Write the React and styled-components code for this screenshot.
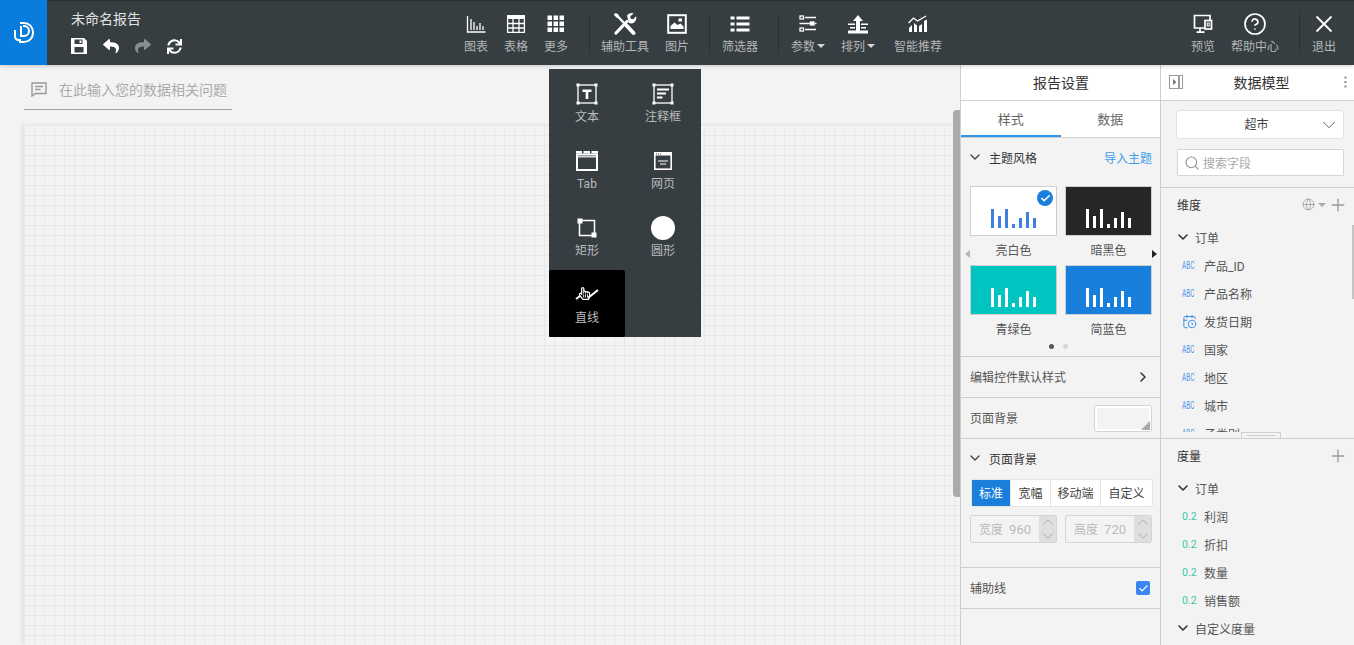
import React from 'react'
import styled, { createGlobalStyle } from 'styled-components'
import { FaReply, FaShare, FaSync, FaRegHandPointer } from 'react-icons/fa'
import { CalendarClock, Check, ChevronDown, ChevronRight, ChevronUp, CircleHelp, Globe, Plus, Search } from 'lucide-react'

const GlobalStyle = createGlobalStyle`
	html, body {
		margin: 0;
		height: 100%;
		overflow: hidden;
		background: #f3f3f3;
		font-family: Roboto, "Noto Sans CJK SC", sans-serif;
		font-size: 12px;
		color: #444;
	}
	* { box-sizing: border-box; }
`

const PageX = styled.div`
	position: relative;
	width: 1354px;
	height: 645px;
	display: flex;
	flex-direction: column;
	overflow: hidden;
`

const TopBarX = styled.header`
	flex: 0 0 65px;
	display: flex;
	align-items: stretch;
	background: #373e41;
	border-top: 1px solid #2b3032;
	box-shadow: 0 1px 4px rgba(0,0,0,0.2);
	z-index: 2;
`

const LogoX = styled.div`
	flex: 0 0 47px;
	display: flex;
	align-items: center;
	justify-content: center;
	background: #0a7cdc;
	margin-top: -1px;
`

const TitleBlockX = styled.div`
	flex: 0 0 409px;
	padding: 8px 0 0 24px;
`

const ReportNameX = styled.div`
	font-size: 14px;
	line-height: 20px;
	color: #e2e2e2;
`

const QuickRowX = styled.div`
	display: flex;
	align-items: center;
	gap: 15px;
	margin-top: 8px;
	height: 18px;
	margin-left: -1px;
	color: #fff;
`

const QuickIconX = styled.span`
	display: flex;
	width: 17px;
	justify-content: center;
	color: ${props => props.$off ? '#8a8f91' : '#fff'};
`

const ToolX = styled.div`
	flex: 0 0 ${props => props.$w}px;
	display: flex;
	flex-direction: column;
	align-items: center;
	padding-top: 11px;
`

const ToolIconX = styled.div`
	height: 24px;
	display: flex;
	align-items: center;
	justify-content: center;
	color: #fff;
`

const ToolLabelX = styled.div`
	margin-top: 2px;
	line-height: 18px;
	white-space: nowrap;
	color: #b4b7b8;
`

const CaretX = styled.span`
	display: inline-block;
	width: 0;
	height: 0;
	margin-left: 2px;
	vertical-align: 3px;
	border-left: 4px solid transparent;
	border-right: 4px solid transparent;
	border-top: 4px solid #d5d5d5;
`

const SepX = styled.div`
	flex: 0 0 1px;
	align-self: flex-start;
	height: 40px;
	margin: 12px ${props => props.$r}px 0 ${props => props.$l}px;
	background: #2c3234;
`

const RightToolsX = styled.div`
	margin-left: auto;
	display: flex;
	padding-right: 6px;
`

const BodyX = styled.div`
	flex: 1;
	display: flex;
	min-height: 0;
`

const StageX = styled.main`
	position: relative;
	flex: 0 0 960px;
	display: flex;
	flex-direction: column;
	padding-left: 24px;
	overflow: hidden;
`

const AskBarX = styled.div`
	flex: 0 0 45px;
	width: 208px;
	display: flex;
	align-items: center;
	gap: 12px;
	padding: 4px 0 0 7px;
	border-bottom: 1px solid #a0a0a0;
	font-size: 14px;
	white-space: nowrap;
	color: #aaa;
`

const CanvasX = styled.div`
	flex: 1;
	margin-top: 15px;
	border-top-left-radius: 3px;
	box-shadow: -3px -1px 2px #e6e6e6;
	background-color: #f3f3f3;
	background-image:
		linear-gradient(to right, #e8e8e8 1px, transparent 1px),
		linear-gradient(to bottom, #e8e8e8 1px, transparent 1px);
	background-size: 10px 10px;
`

const StageScrollX = styled.div`
	position: absolute;
	right: 0;
	top: 45px;
	width: 7px;
	height: 387px;
	background: #ababab;
	border-radius: 4px 0 0 4px;
`

const PanelX = styled.aside`
	flex: 0 0 ${props => props.$w}px;
	display: flex;
	flex-direction: column;
	border-left: 1px solid #cfcfcf;
	background: #f3f3f3;
`

const PanelHeadX = styled.div`
	flex: 0 0 36px;
	height: 36px;
	display: flex;
	align-items: center;
	justify-content: center;
	padding: 0 7px 2px 8px;
	background: #fff;
	border-bottom: 1px solid #cfcfcf;
	font-size: 14px;
	color: #333;
`

const PanelTitleX = styled.div`
	flex: 1;
	text-align: center;
	padding-right: 4px;
`

const TabsX = styled.div`
	flex: 0 0 37px;
	display: flex;
	background: #fff;
	border-bottom: 1px solid #cfcfcf;
`

const TabX = styled.div`
	flex: 1;
	display: flex;
	align-items: center;
	justify-content: center;
	font-size: 13px;
	color: #666;
	border-bottom: 2px solid ${props => props.$active ? '#2a96ee' : 'transparent'};
`

const SectionHeadX = styled.div`
	height: 40px;
	display: flex;
	align-items: center;
	padding: 0 8px 2px 6px;
	color: #333;
`

const SectionNameX = styled.span`
	margin-left: 6px;
	flex: 1;
`

const LinkX = styled.span`
	color: #3d9cec;
`

const ThemeWrapX = styled.div`
	position: relative;
	display: grid;
	grid-template-columns: 87px 87px;
	column-gap: 8px;
	padding: 8px 0 0 9px;
`

const ThemeItemX = styled.div`
	display: flex;
	flex-direction: column;
`

const ThemeCardX = styled.div`
	position: relative;
	height: 50px;
	display: flex;
	align-items: flex-end;
	justify-content: center;
	gap: 4px;
	padding-bottom: 7px;
	background: ${props => props.$bg};
	border: 1px solid #cfcfcf;
`

const BarX = styled.i`
	display: block;
	width: 3px;
	height: ${props => props.$h}px;
	background: ${props => props.$color};
`

const ThemeNameX = styled.div`
	height: 29px;
	line-height: 30px;
	text-align: center;
	color: #555;
`

const TickX = styled.div`
	position: absolute;
	top: 3px;
	right: 3px;
	width: 16px;
	height: 16px;
	display: flex;
	align-items: center;
	justify-content: center;
	border-radius: 50%;
	background: #1b7fdc;
	color: #fff;
`

const PagerArrowX = styled.div`
	position: absolute;
	top: 72px;
	${props => props.$side}: ${props => props.$side === 'left' ? '4px' : '3px'};
	width: 0;
	height: 0;
	border-top: 4px solid transparent;
	border-bottom: 4px solid transparent;
	${props => props.$side === 'left' ? 'border-right: 5px solid #b5b5b5;' : 'border-left: 5px solid #222;'}
`

const DotsX = styled.div`
	height: 13px;
	display: flex;
	justify-content: center;
	gap: 9px;
	border-bottom: 1px solid #cfcfcf;
	padding-right: 4px;
`

const DotX = styled.i`
	display: block;
	width: 5px;
	height: 5px;
	border-radius: 50%;
	background: ${props => props.$on ? '#555' : '#d5d5d5'};
`

const RowX = styled.div`
	height: 41px;
	display: flex;
	align-items: center;
	justify-content: space-between;
	padding: 0 ${props => props.$pr || 9}px 0 9px;
	border-bottom: 1px solid #cfcfcf;
	color: #555;
`

const RowTextX = styled.span`
	margin-top: -2px;
`

const SwatchX = styled.div`
	position: relative;
	width: 58px;
	height: 27px;
	background: #f3f3f3;
	border: 3px solid #fff;
	outline: 1px solid #d5d5d5;
	outline-offset: -1px;
	border-radius: 2px;
	&::after {
		content: '';
		position: absolute;
		right: -1px;
		bottom: -1px;
		border-left: 9px solid transparent;
		border-bottom: 9px solid #a9a9a9;
	}
`

const PageSizeX = styled.div`
	height: 129px;
	border-bottom: 1px solid #cfcfcf;
`

const SegmentsX = styled.div`
	display: flex;
	height: 28px;
	margin-left: 10px;
	width: 182px;
	background: #fff;
	border: 1px solid #e4e4e4;
	border-radius: 2px;
`

const SegmentX = styled.div`
	flex: 0 0 ${props => props.$w}px;
	display: flex;
	align-items: center;
	justify-content: center;
	padding-bottom: 2px;
	background: ${props => props.$active ? '#1a7fdb' : 'transparent'};
	color: ${props => props.$active ? '#fff' : '#444'};
	border-right: 1px solid #e4e4e4;
	&:last-child { border-right: 0; }
`

const SizeRowX = styled.div`
	display: flex;
	gap: 8px;
	margin: 8px 0 0 9px;
`

const SizeInputX = styled.div`
	width: 87px;
	height: 28px;
	display: flex;
	align-items: center;
	padding-left: 8px;
	border: 1px solid #d5d5d5;
	border-radius: 2px;
	color: #bbb;
`

const SizeTextX = styled.span`
	margin-top: -2px;
`

const SizeValueX = styled.span`
	flex: 1;
	padding-right: 8px;
	text-align: right;
	font-size: 13px;
`

const SpinX = styled.div`
	flex: 0 0 17px;
	height: 100%;
	overflow: hidden;
	display: flex;
	flex-direction: column;
	align-items: center;
	justify-content: center;
	background: #dfdfdf;
	color: #999;
	svg { margin: -2px 0; flex: none; }
`

const CheckX = styled.div`
	width: 14px;
	height: 14px;
	display: flex;
	align-items: center;
	justify-content: center;
	background: #3a86f0;
	border-radius: 2px;
	color: #fff;
`

const SelectX = styled.div`
	height: 29px;
	margin: 9px 10px 0 15px;
	display: flex;
	align-items: center;
	padding: 0 3px 0 0;
	background: #fff;
	border: 1px solid #e2e2e2;
	border-radius: 3px;
	color: #444;
`

const SelectTextX = styled.span`
	flex: 1;
	text-align: center;
	padding: 0 0 2px 18px;
`

const SearchBoxX = styled.div`
	height: 27px;
	margin: 10px 10px 0 16px;
	display: flex;
	align-items: center;
	gap: 3px;
	padding-left: 6px;
	background: #fff;
	border: 1px solid #d5d5d5;
	border-radius: 1px;
	color: #aaa;
`

const ModelTopX = styled.div`
	flex: 0 0 123px;
	border-bottom: 1px solid #cfcfcf;
`

const DimensionX = styled.section`
	position: relative;
	flex: 0 0 251px;
	border-bottom: 1px solid #cfcfcf;
`

const GroupHeadX = styled.div`
	height: 36px;
	display: flex;
	align-items: center;
	justify-content: space-between;
	padding: 0 6px 3px 16px;
	color: #333;
`

const HeadToolsX = styled.div`
	display: flex;
	align-items: center;
	color: #aaa;
`

const SmallCaretX = styled.span`
	width: 0;
	height: 0;
	margin: 0 2px 0 3px;
	border-left: 4px solid transparent;
	border-right: 4px solid transparent;
	border-top: 4px solid #aaa;
`

const FieldListX = styled.div`
	height: ${props => props.$h ? `${props.$h}px` : 'auto'};
	overflow: hidden;
`

const FolderX = styled.div`
	height: 28px;
	display: flex;
	align-items: center;
	gap: 4px;
	padding: 0 0 2px 14px;
	color: #555;
`

const FieldX = styled.div`
	height: 28px;
	display: flex;
	align-items: center;
	padding: 0 0 2px 21px;
	color: #555;
`

const FieldTypeX = styled.span`
	flex: 0 0 22px;
	display: block;
	font-size: 10px;
	color: #4d96ea;
	transform-origin: left center;
	transform: scaleX(0.64);
`

const FieldNumX = styled.span`
	flex: 0 0 22px;
	display: block;
	font-size: 10.5px;
	color: #3cc9a8;
`

const FieldIconX = styled.span`
	flex: 0 0 22px;
	display: flex;
	align-items: center;
`

const DragBarX = styled.div`
	height: 6px;
	display: flex;
	justify-content: center;
`

const DragHandleX = styled.div`
	width: 40px;
	height: 6px;
	margin-left: 6px;
	background: #f3f3f3;
	border: 1px solid #cfcfcf;
	border-bottom: 0;
	padding: 2px 5px 0;
	&::after {
		content: '';
		display: block;
		height: 1px;
		background: #cfcfcf;
	}
`

const ModelScrollX = styled.div`
	position: absolute;
	right: 0;
	top: 37px;
	width: 2px;
	height: 74px;
	background: #c4c4c4;
`

const MenuX = styled.div`
	position: absolute;
	left: 549px;
	top: 69px;
	width: 152px;
	height: 268px;
	display: grid;
	grid-template-columns: 76px 76px;
	grid-auto-rows: 67px;
	background: #373e41;
	z-index: 3;
`

const MenuItemX = styled.div`
	display: flex;
	flex-direction: column;
	align-items: center;
	padding-top: 13px;
	border-radius: 2px;
	background: ${props => props.$active ? '#000' : 'transparent'};
`

const MenuIconX = styled.div`
	height: 24px;
	display: flex;
	align-items: center;
	justify-content: center;
	color: #fff;
`

const MenuLabelX = styled.div`
	margin-top: 2px;
	line-height: 18px;
	color: #b9bbbc;
`

const LogoIcon = () => (
	<svg width="22" height="22" viewBox="0 0 22 22" fill="none" stroke="#fff" strokeWidth="2">
		<path d="M2 8v6.500a3.500 3.500 0 0 0 3.500 3.500h2.500" />
		<path d="M8 4v10h3a5 5 0 0 0 0-10h-1" />
		<path d="M7 1h4a9 9 0 0 1 9 9v1a9 9 0 0 1-9 9H6" />
	</svg>
)

const SaveIcon = () => (
	<svg width="16" height="16" viewBox="0 0 16 16">
		<path fill="#fff" fillRule="evenodd" d="M0 0h13l3 3v13H0zM3.500 1.500v4.500h8V1.500zM8.500 2.500h2v2.500h-2zM3.500 9v5.500h9V9z" />
	</svg>
)

const ChartIcon = () => (
	<svg width="20" height="18" viewBox="0 0 20 18" fill="none" stroke="#fff" strokeWidth="1.300">
		<path d="M1.500 1v16h18" />
		<path d="M5 4v11M8 7v8M11 11v4M14 8v7M17 11v4" />
	</svg>
)

const TableIcon = () => (
	<svg width="20" height="20" viewBox="0 0 20 20" fill="none" stroke="#fff">
		<path fill="#fff" stroke="none" d="M1 1h18v4H1z" />
		<path strokeWidth="1.300" d="M1.600 1.600h16.800v16.800H1.600zM1.600 9.500h16.800M1.600 14h16.800M7 5v13M13 5v13" />
	</svg>
)

const GridIcon = () => (
	<svg width="18" height="18" viewBox="0 0 18 18" fill="#fff">
		{[1, 7, 13].map(y => [1, 7, 13].map(x => <rect key={`${x}-${y}`} x={x - 0.5} y={y - 0.5} width="4.500" height="4.500" />))}
	</svg>
)

const ToolsIcon = () => (
	<svg width="24" height="24" viewBox="0 0 24 24" fill="none" stroke="#fff">
		<path strokeWidth="2.400" d="M3 2.500l8 8.500" />
		<path strokeWidth="4" strokeLinecap="round" d="M13.500 13.500l7 7.500" />
		<path strokeWidth="3.200" d="M3 21l11-11.500" strokeLinecap="round" />
		<path fill="#fff" stroke="none" d="M2 1l3 1 1 3-2 1-3-3zM14 3.500c1.500-2 4-3 6.500-2l-3.300 3 .6 2.200 2.300.5 3-3c.8 2.500-.2 5-2 6.300-1.600 1.100-3.800 1.200-5.300.3z" />
	</svg>
)

const ImageIcon = () => (
	<svg width="20" height="20" viewBox="0 0 20 20" fill="none">
		<rect x="1.200" y="1.200" width="17.600" height="17.600" stroke="#fff" strokeWidth="2" />
		<path fill="#fff" d="M3.500 15v-3l4-3.500 3 2.500 3-1.500 3 3v2.500z" />
		<rect x="11.500" y="4.500" width="3.500" height="3" fill="#fff" />
	</svg>
)

const FilterIcon = () => (
	<svg width="20" height="18" viewBox="0 0 20 18" fill="#fff">
		<rect x="0.500" y="1.500" width="4" height="3" />
		<rect x="6.500" y="1.500" width="13" height="3" />
		<rect x="0.500" y="7.500" width="4" height="3" />
		<rect x="6.500" y="7.500" width="13" height="3" />
		<rect x="0.500" y="13.500" width="4" height="3" />
		<rect x="6.500" y="13.500" width="13" height="3" />
	</svg>
)

const ParamsIcon = () => (
	<svg width="20" height="18" viewBox="0 0 20 18" fill="none" stroke="#fff" strokeWidth="1.300">
		<rect x="2" y="1" width="3.500" height="3" />
		<path d="M7 2.500h11M1.500 8.500h11M17 8.500h1.500M7 14.500h11" />
		<rect x="12.500" y="7" width="3.500" height="3" fill="#fff" />
		<rect x="2" y="13" width="3.500" height="3" />
	</svg>
)

const SortIcon = () => (
	<svg width="22" height="19" viewBox="0 0 22 19" fill="#fff">
		<path d="M11 0l5 6h-3v11H9V6H6z" />
		<rect x="1" y="8.500" width="7" height="1.500" />
		<rect x="14" y="8.500" width="7" height="1.500" />
		<rect x="3" y="12" width="5" height="1.500" />
		<rect x="14" y="12" width="5" height="1.500" />
		<rect x="1" y="15.500" width="20" height="3" />
	</svg>
)

const TrendIcon = () => (
	<svg width="20" height="18" viewBox="0 0 20 18" fill="#fff">
		<path fill="none" stroke="#fff" strokeWidth="1.300" d="M0.500 8l5-5 4 3 8.500-5" />
		<path d="M1 17v-4l3-3v7zM6 17V8l3 2.500V17zM11 17v-6l3-2v8zM16 17V6l3-1.500V17z" />
	</svg>
)

const PreviewIcon = () => (
	<svg width="20" height="20" viewBox="0 0 20 20" fill="none" stroke="#fff" strokeWidth="1.700">
		<path d="M12 14H1.500V1.500h15.500V6" />
		<rect x="12" y="6.500" width="6.500" height="8.500" />
		<path d="M7 14v4M3.500 18.200h8" />
		<rect x="14.200" y="9" width="2" height="3" strokeWidth="1" />
	</svg>
)

const CloseIcon = () => (
	<svg width="18" height="18" viewBox="0 0 18 18" stroke="#fff" strokeWidth="1.800">
		<path d="M1.500 1.500l15 15M16.500 1.500l-15 15" />
	</svg>
)

const CommentIcon = () => (
	<svg width="16" height="15" viewBox="0 0 16 15" fill="none" stroke="#999" strokeWidth="1.400">
		<path d="M1 1h14v10.500H4.500L1 14z" />
		<path d="M4 4.500h8M4 7.500h5.500" />
	</svg>
)

const FrameCorners = () => (
	<>
		<rect x="2" y="2" width="18" height="18" fill="none" stroke="#fff" strokeWidth="1.300" />
		<rect x="0.500" y="0.500" width="3" height="3" fill="#fff" />
		<rect x="18.500" y="0.500" width="3" height="3" fill="#fff" />
		<rect x="0.500" y="18.500" width="3" height="3" fill="#fff" />
		<rect x="18.500" y="18.500" width="3" height="3" fill="#fff" />
	</>
)

const TextBoxIcon = () => (
	<svg width="22" height="22" viewBox="0 0 22 22">
		<FrameCorners />
		<path fill="#fff" d="M6.500 6.500h9v2.500h-3.200v7h-2.600V9H6.500z" />
	</svg>
)

const NoteBoxIcon = () => (
	<svg width="22" height="22" viewBox="0 0 22 22" fill="#fff">
		<FrameCorners />
		<rect x="5" y="5.500" width="12" height="2" />
		<rect x="5" y="9.500" width="9" height="2" />
		<rect x="5" y="13.500" width="5.500" height="2" />
	</svg>
)

const TabBoxIcon = () => (
	<svg width="22" height="20" viewBox="0 0 22 20" fill="none">
		<path fill="#fff" d="M0 0h6v2.500H0zM7.500 0h6.500v2.500H7.500zM15.500 0H22v2.500h-6.500z" />
		<path stroke="#fff" strokeWidth="2" d="M1 3.500h20V19H1z" />
		<path stroke="#fff" d="M2 5.800h18" strokeWidth="1.200" />
	</svg>
)

const WebBoxIcon = () => (
	<svg width="18" height="18" viewBox="0 0 18 18" fill="none">
		<rect x="0.800" y="0.800" width="16.400" height="16.400" stroke="#fff" strokeWidth="1.600" />
		<rect x="1" y="1" width="16" height="2.500" fill="#fff" />
		<path stroke="#373e41" d="M2 2h1M4 2h1M6 2h1" />
		<path stroke="#fff" d="M4 9h10M6 12h6" strokeWidth="1.200" />
	</svg>
)

const RectBoxIcon = () => (
	<svg width="20" height="20" viewBox="0 0 20 20">
		<rect x="2.500" y="2.500" width="15" height="15" fill="none" stroke="#fff" strokeWidth="1.500" />
		<rect x="0.500" y="0.500" width="5" height="5" fill="#fff" />
		<rect x="14.500" y="14.500" width="5" height="5" fill="#fff" />
	</svg>
)

const CircleIcon = () => (
	<svg width="24" height="24" viewBox="0 0 24 24">
		<circle cx="12" cy="12" r="12" fill="#fff" />
	</svg>
)

const LineHandIcon = () => (
	<svg width="24" height="18" viewBox="0 0 24 18" fill="none">
		<path stroke="#fff" strokeWidth="2" d="M13 12L23 4" />
		<path stroke="#fff" strokeWidth="2" d="M1 13l4-3" />
		<foreignObject x="3" y="1" width="14" height="16">
			<FaRegHandPointer size={13} color="#fff" />
		</foreignObject>
	</svg>
)

const PanelToggleIcon = () => (
	<svg width="14" height="14" viewBox="0 0 14 14" fill="none" stroke="#9a9a9a">
		<rect x="0.500" y="0.500" width="13" height="13" />
		<path d="M10 1v12" strokeWidth="2" />
		<path fill="#777" stroke="none" d="M4 4l3.500 3L4 10z" />
	</svg>
)

const KebabIcon = () => (
	<svg width="3" height="12" viewBox="0 0 3 12" fill="#888">
		<rect x="0.500" y="0.500" width="2" height="2" />
		<rect x="0.500" y="5" width="2" height="2" />
		<rect x="0.500" y="9.500" width="2" height="2" />
	</svg>
)

const BAR_HEIGHTS = [19, 12, 19, 4, 10, 16, 10]

const THEMES = [
	{ name: '亮白色', bg: '#fff', bar: '#3f7fdd', checked: true },
	{ name: '暗黑色', bg: '#262626', bar: '#fff' },
	{ name: '青绿色', bg: '#00c4c0', bar: '#fff' },
	{ name: '简蓝色', bg: '#197fdc', bar: '#fff' }
]

const MENU_ITEMS = [
	{ label: '文本', icon: <TextBoxIcon /> },
	{ label: '注释框', icon: <NoteBoxIcon /> },
	{ label: 'Tab', icon: <TabBoxIcon /> },
	{ label: '网页', icon: <WebBoxIcon /> },
	{ label: '矩形', icon: <RectBoxIcon /> },
	{ label: '圆形', icon: <CircleIcon /> },
	{ label: '直线', icon: <LineHandIcon />, active: true }
]

const Tool = ({ w, icon, label, caret }) => (
	<ToolX $w={w}>
		<ToolIconX>{icon}</ToolIconX>
		<ToolLabelX>{label}{caret && <CaretX />}</ToolLabelX>
	</ToolX>
)

const Field = ({ name, kind }) => (
	<FieldX>
		{kind === 'date' && <FieldIconX><CalendarClock size={15} color="#3d8fe8" strokeWidth={1.6} /></FieldIconX>}
		{kind === 'num' && <FieldNumX>0.2</FieldNumX>}
		{!kind && <FieldTypeX>ABC</FieldTypeX>}
		{name}
	</FieldX>
)

const Folder = ({ name }) => (
	<FolderX>
		<ChevronDown size={16} strokeWidth={2.4} color="#333" />
		{name}
	</FolderX>
)

const SizeInput = ({ label, value }) => (
	<SizeInputX>
		<SizeTextX>{label}</SizeTextX>
		<SizeValueX><SizeTextX>{value}</SizeTextX></SizeValueX>
		<SpinX>
			<ChevronUp size={18} strokeWidth={1} />
			<ChevronDown size={18} strokeWidth={1} />
		</SpinX>
	</SizeInputX>
)

const App = () => (
	<PageX>
		<GlobalStyle />
		<TopBarX>
			<LogoX><LogoIcon /></LogoX>
			<TitleBlockX>
				<ReportNameX>未命名报告</ReportNameX>
				<QuickRowX>
					<QuickIconX><SaveIcon /></QuickIconX>
					<QuickIconX><FaReply size={16} /></QuickIconX>
					<QuickIconX $off><FaShare size={16} /></QuickIconX>
					<QuickIconX><FaSync size={15} /></QuickIconX>
				</QuickRowX>
			</TitleBlockX>
			<Tool w={40} icon={<ChartIcon />} label="图表" />
			<Tool w={40} icon={<TableIcon />} label="表格" />
			<Tool w={40} icon={<GridIcon />} label="更多" />
			<SepX $l={13} $r={5} />
			<Tool w={60} icon={<ToolsIcon />} label="辅助工具" />
			<Tool w={44} icon={<ImageIcon />} label="图片" />
			<SepX $l={10} $r={8} />
			<Tool w={44} icon={<FilterIcon />} label="筛选器" />
			<SepX $l={16} $r={4} />
			<Tool w={50} icon={<ParamsIcon />} label="参数" caret />
			<Tool w={50} icon={<SortIcon />} label="排列" caret />
			<Tool w={70} icon={<TrendIcon />} label="智能推荐" />
			<RightToolsX>
				<Tool w={44} icon={<PreviewIcon />} label="预览" />
				<Tool w={60} icon={<CircleHelp size={24} strokeWidth={1.7} />} label="帮助中心" />
				<SepX $l={14} $r={0} />
				<Tool w={48} icon={<CloseIcon />} label="退出" />
			</RightToolsX>
		</TopBarX>

		<BodyX>
			<StageX>
				<AskBarX>
					<CommentIcon />
					在此输入您的数据相关问题
				</AskBarX>
				<CanvasX />
				<StageScrollX />
			</StageX>

			<PanelX $w={200}>
				<PanelHeadX>报告设置</PanelHeadX>
				<TabsX>
					<TabX $active>样式</TabX>
					<TabX>数据</TabX>
				</TabsX>
				<SectionHeadX>
					<ChevronDown size={16} strokeWidth={2} color="#444" />
					<SectionNameX>主题风格</SectionNameX>
					<LinkX>导入主题</LinkX>
				</SectionHeadX>
				<ThemeWrapX>
					{THEMES.map(theme => (
						<ThemeItemX key={theme.name}>
							<ThemeCardX $bg={theme.bg}>
								{BAR_HEIGHTS.map((h, i) => <BarX key={i} $h={h} $color={theme.bar} />)}
								{theme.checked && <TickX><Check size={11} strokeWidth={3.5} /></TickX>}
							</ThemeCardX>
							<ThemeNameX>{theme.name}</ThemeNameX>
						</ThemeItemX>
					))}
					<PagerArrowX $side="left" />
					<PagerArrowX $side="right" />
				</ThemeWrapX>
				<DotsX>
					<DotX $on />
					<DotX />
				</DotsX>
				<RowX>
					<RowTextX>编辑控件默认样式</RowTextX>
					<ChevronRight size={16} strokeWidth={2.2} color="#333" />
				</RowX>
				<RowX $pr={8}>
					<RowTextX>页面背景</RowTextX>
					<SwatchX />
				</RowX>
				<PageSizeX>
					<SectionHeadX>
						<ChevronDown size={16} strokeWidth={2} color="#444" />
						<SectionNameX>页面背景</SectionNameX>
					</SectionHeadX>
					<SegmentsX>
						<SegmentX $w={39} $active>标准</SegmentX>
						<SegmentX $w={40}>宽幅</SegmentX>
						<SegmentX $w={50}>移动端</SegmentX>
						<SegmentX $w={51}>自定义</SegmentX>
					</SegmentsX>
					<SizeRowX>
						<SizeInput label="宽度" value="960" />
						<SizeInput label="高度" value="720" />
					</SizeRowX>
				</PageSizeX>
				<RowX $pr={10}>
					<RowTextX>辅助线</RowTextX>
					<CheckX><Check size={11} strokeWidth={2.5} /></CheckX>
				</RowX>
			</PanelX>

			<PanelX $w={194}>
				<ModelTopX>
					<PanelHeadX>
						<PanelToggleIcon />
						<PanelTitleX>数据模型</PanelTitleX>
						<KebabIcon />
					</PanelHeadX>
					<SelectX>
						<SelectTextX>超市</SelectTextX>
						<ChevronDown size={22} strokeWidth={1} color="#555" />
					</SelectX>
					<SearchBoxX>
						<Search size={16} strokeWidth={1.8} color="#999" />
						搜索字段
					</SearchBoxX>
				</ModelTopX>
				<DimensionX>
					<FieldListX $h={244}>
						<GroupHeadX>
							维度
							<HeadToolsX>
								<Globe size={13} strokeWidth={1} color="#777" />
								<SmallCaretX />
								<Plus size={20} strokeWidth={1.6} color="#999" />
							</HeadToolsX>
						</GroupHeadX>
						<Folder name="订单" />
						<Field name="产品_ID" />
						<Field name="产品名称" />
						<Field name="发货日期" kind="date" />
						<Field name="国家" />
						<Field name="地区" />
						<Field name="城市" />
						<Field name="子类别" />
					</FieldListX>
					<DragBarX><DragHandleX /></DragBarX>
					<ModelScrollX />
				</DimensionX>
				<FieldListX>
					<GroupHeadX>
						度量
						<HeadToolsX><Plus size={20} strokeWidth={1.6} color="#999" /></HeadToolsX>
					</GroupHeadX>
					<Folder name="订单" />
					<Field name="利润" kind="num" />
					<Field name="折扣" kind="num" />
					<Field name="数量" kind="num" />
					<Field name="销售额" kind="num" />
					<Folder name="自定义度量" />
				</FieldListX>
			</PanelX>
		</BodyX>

		<MenuX>
			{MENU_ITEMS.map(item => (
				<MenuItemX key={item.label} $active={item.active}>
					<MenuIconX>{item.icon}</MenuIconX>
					<MenuLabelX>{item.label}</MenuLabelX>
				</MenuItemX>
			))}
		</MenuX>
	</PageX>
)

export default App
